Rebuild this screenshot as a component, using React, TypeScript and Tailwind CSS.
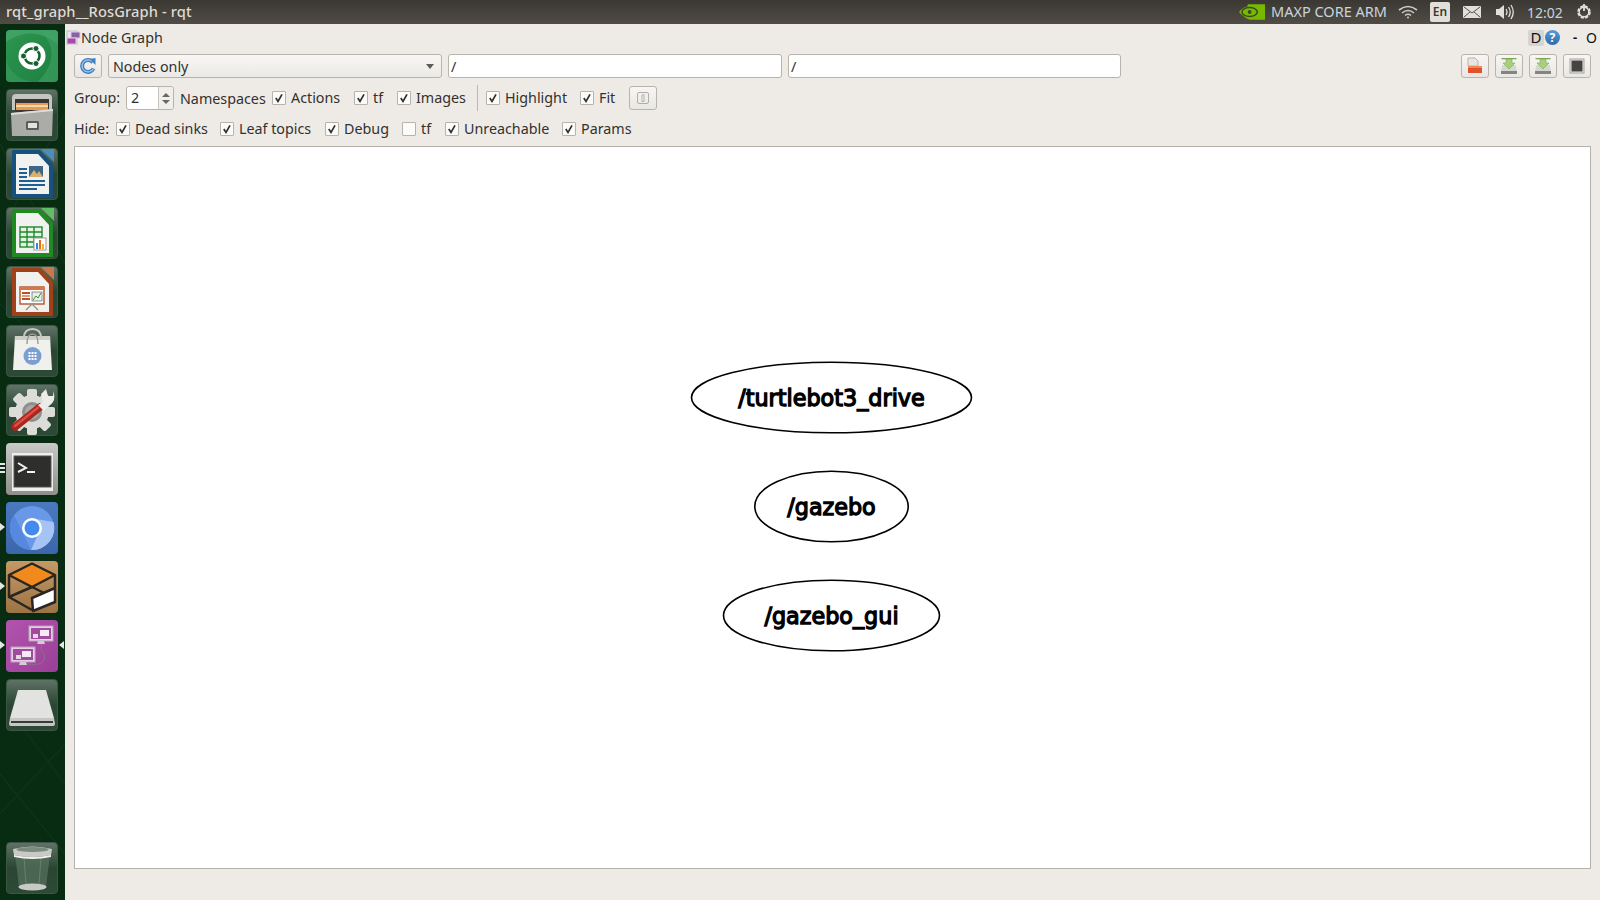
import type { ReactNode } from "react";

function Tile({ bg, children, className }: { bg: string; children: ReactNode; className?: string }) {
  return (
    <div className={`w-[52px] h-[52px] rounded-[4px] overflow-hidden shrink-0 ${bg} ${className ?? ""}`}>
      <svg viewBox="0 0 52 52" className="w-[52px] h-[52px] block">
        {children}
      </svg>
    </div>
  );
}

const plainTile = "bg-gradient-to-b from-[#5f7266] via-[#2a4632] to-[#2d4a36] border border-[#3d5546]";

function UbuntuIcon() {
  return (
    <Tile bg="bg-gradient-to-br from-[#2c9650] to-[#1e8040]">
      <path d="M0 12 Q26 -6 52 14 L52 0 L0 0Z" fill="#52ad74" opacity=".55" />
      <path d="M34 0 Q58 24 32 52 L52 52 L52 0Z" fill="#44a468" opacity=".55" />
      <path d="M0 30 Q6 48 26 52 L0 52Z" fill="#44a468" opacity=".4" />
      <circle cx="26" cy="26" r="13.5" fill="#ffffff" />
      <circle cx="26" cy="26" r="7.5" fill="none" stroke="#14602f" strokeWidth="2.6" />
      <circle cx="30" cy="18.5" r="3" fill="#14602f" stroke="#fff" />
      <circle cx="17.5" cy="26" r="3" fill="#14602f" stroke="#fff" />
      <circle cx="30" cy="33.5" r="3" fill="#14602f" stroke="#fff" />
    </Tile>
  );
}

function FilesIcon() {
  return (
    <Tile bg={plainTile}>
      <path d="M5 8 Q5 4 9 4 L41 4 Q45 4 45 8 L45 20 L5 20Z" fill="#c4c4c1" />
      <rect x="8" y="9" width="34" height="13" fill="#3a3633" />
      <rect x="9" y="13" width="32" height="7" fill="#e79a55" />
      <rect x="9" y="15" width="32" height="2" fill="#f7d9a9" />
      <path d="M4 23 L46 19 L45 46 L5 46Z" fill="#ababa8" />
      <path d="M4 23 L46 19 L46 21 L4 25Z" fill="#dcdcd9" />
      <rect x="19" y="31" width="13" height="9" rx="1.5" fill="#5c5c5a" />
      <rect x="21" y="33" width="9" height="5" fill="#e2e2e0" />
    </Tile>
  );
}

function DocShape({ edge, fold, children }: { edge: string; fold: string; children: ReactNode }) {
  return (
    <>
      <path d="M5 1 L33 1 L46 15 L46 49 L5 49Z" fill={edge} />
      <path d="M34 0 L47 0 L47 13Z" fill={fold} />
      <path d="M9 5 L31 5 L42 17 L42 45 L9 45Z" fill="#f1f1f0" />
      {children}
    </>
  );
}

function WriterIcon() {
  return (
    <Tile bg={plainTile}>
      <DocShape edge="#17527f" fold="#4d8dbb">
        <rect x="12" y="19" width="8" height="2" fill="#1b5f93" />
        <rect x="12" y="23" width="8" height="2" fill="#1b5f93" />
        <rect x="12" y="27" width="8" height="2" fill="#1b5f93" />
        <rect x="22" y="17" width="14" height="11" fill="#3e6687" />
        <path d="M22 28 L27 21 L30 25 L32 22 L36 28Z" fill="#d9b070" />
        <rect x="12" y="31" width="26" height="2" fill="#1b5f93" />
        <rect x="12" y="35" width="26" height="2" fill="#1b5f93" />
        <rect x="12" y="39" width="18" height="2" fill="#1b5f93" />
      </DocShape>
    </Tile>
  );
}

function CalcIcon() {
  return (
    <Tile bg={plainTile}>
      <DocShape edge="#1f8a1f" fold="#62bd62">
        <rect x="13" y="19" width="22" height="20" fill="#e6f3e4" stroke="#1d8a2b" strokeWidth="1.4" />
        <path d="M13 24 H35 M13 29 H35 M13 34 H35 M20 19 V39 M27 19 V39" stroke="#1d8a2b" strokeWidth="1.4" />
        <rect x="27" y="30" width="12" height="12" fill="#fff" stroke="#9a9a9a" />
        <rect x="29" y="35" width="2" height="6" fill="#2b8ccf" />
        <rect x="32" y="32" width="2" height="9" fill="#e5672a" />
        <rect x="35" y="36" width="2" height="5" fill="#f0b429" />
      </DocShape>
    </Tile>
  );
}

function ImpressIcon() {
  return (
    <Tile bg={plainTile}>
      <DocShape edge="#a0411a" fold="#c9784e">
        <rect x="13" y="20" width="24" height="17" fill="#fff" stroke="#b5532a" strokeWidth="1.4" />
        <rect x="13" y="20" width="24" height="3" fill="#d8764a" />
        <rect x="15" y="25" width="8" height="2" fill="#b5532a" />
        <rect x="15" y="28" width="8" height="2" fill="#e39a75" />
        <rect x="15" y="31" width="8" height="2" fill="#b5532a" />
        <rect x="25" y="25" width="10" height="9" fill="#e6efe2" stroke="#666" strokeWidth=".7" />
        <path d="M26 33 L29 29 L31 31 L34 26" stroke="#3f8f3f" fill="none" />
        <path d="M25 37 L19 43 M25 37 L31 43" stroke="#8f8f8f" strokeWidth="1.3" />
      </DocShape>
    </Tile>
  );
}

function BagIcon() {
  return (
    <Tile bg={plainTile}>
      <path d="M8 10 L43 10 L45 44 L6 44Z" fill="#f0f0ec" />
      <path d="M8 10 L43 10 L43.2 14 L7.8 14Z" fill="#cfcfca" />
      <path d="M17 12 Q17 3 25.5 3 Q34 3 34 12" fill="none" stroke="#c6c6c2" strokeWidth="2" />
      <path d="M20 18 Q20 8 25.5 8 Q31 8 31 18" fill="none" stroke="#9a9a96" strokeWidth="1.4" />
      <circle cx="25.5" cy="30" r="9" fill="#7b9fd0" />
      <g fill="#fff">
        <rect x="21.5" y="26" width="2" height="2" /><rect x="24.5" y="26" width="2" height="2" /><rect x="27.5" y="26" width="2" height="2" />
        <rect x="21.5" y="29" width="2" height="2" /><rect x="24.5" y="29" width="2" height="2" /><rect x="27.5" y="29" width="2" height="2" />
        <rect x="21.5" y="32" width="2" height="2" /><rect x="24.5" y="32" width="2" height="2" /><rect x="27.5" y="32" width="2" height="2" />
      </g>
    </Tile>
  );
}

function SettingsIcon() {
  return (
    <Tile bg={plainTile}>
      <g fill="#dcdcd8">
        <circle cx="25" cy="27" r="17" />
        <rect x="20" y="4" width="10" height="46" rx="2" />
        <rect x="2" y="22" width="46" height="10" rx="2" />
        <rect x="20" y="4" width="10" height="46" rx="2" transform="rotate(45 25 27)" />
        <rect x="20" y="4" width="10" height="46" rx="2" transform="rotate(-45 25 27)" />
      </g>
      <circle cx="25" cy="27" r="10" fill="#8c8f8b" />
      <circle cx="25" cy="27" r="7" fill="#a5a8a3" />
      <path d="M8 42 L33 22" stroke="#a82820" strokeWidth="7.5" strokeLinecap="round" />
      <path d="M8 41 L31 22.5" stroke="#df4d42" strokeWidth="2.5" strokeLinecap="round" />
      <path d="M31 20 L36 17 L34 9 L39 4 L41 11 L46 11 L46 6 Q50 16 42 21 L37 26Z" fill="#ecece9" />
    </Tile>
  );
}

function TerminalIcon() {
  return (
    <Tile bg="bg-gradient-to-b from-[#c9c9c7] to-[#8f8f8c]">
      <rect x="6" y="10" width="41" height="38" fill="#eeeeec" />
      <rect x="8" y="13" width="37" height="31" fill="#2e2e2c" stroke="#555" />
      <path d="M12 20 L20 25 L12 29" fill="none" stroke="#f0f0f0" strokeWidth="2" />
      <rect x="21" y="28" width="8" height="2" fill="#f0f0f0" />
    </Tile>
  );
}

function ChromiumIcon() {
  return (
    <Tile bg="bg-gradient-to-b from-[#4b79bf] to-[#3c66aa]">
      <circle cx="26" cy="26" r="22" fill="#6a98e8" />
      <path d="M47.5 20 A22 22 0 0 1 25 48 L34 28 L30 17Z" fill="#a6c3f5" />
      <path d="M8 13 L25 48 A22 22 0 0 1 8 13Z" fill="#5688df" />
      <circle cx="26" cy="26" r="10" fill="#fff" />
      <circle cx="26" cy="26" r="7.5" fill="#4289f0" />
    </Tile>
  );
}

function GazeboIcon() {
  return (
    <Tile bg="bg-gradient-to-b from-[#c39a66] to-[#9c7344]">
      <path d="M26 2.5 L49 14 L26 26 L3 14Z" fill="#f08a1c" stroke="#2b2622" strokeWidth="2.5" strokeLinejoin="round" />
      <path d="M3 14 L3 36 L26 49 M3 36 L26 26 L40 33 M49 14 L49 27" fill="none" stroke="#2b2622" strokeWidth="2.5" strokeLinejoin="round" />
      <path d="M26 37 L49 27 L49 41 L27 50Z" fill="#ffffff" stroke="#2b2622" strokeWidth="2.5" strokeLinejoin="round" />
    </Tile>
  );
}

function RqtIcon() {
  return (
    <Tile bg="bg-gradient-to-br from-[#b254ae] to-[#9a3f98]">
      <rect x="23" y="6" width="24" height="15" fill="#e4cfe4" stroke="#b9a4b9" />
      <rect x="25" y="8" width="20" height="11" fill="#a24aa0" />
      <rect x="34" y="10" width="9" height="6" fill="#f4eaf4" />
      <rect x="27" y="14" width="5" height="4" fill="#e9d4e9" />
      <path d="M32 21 H38 L39 24 H31Z" fill="#d8c8d8" />
      <rect x="5" y="27" width="24" height="15" fill="#e4cfe4" stroke="#b9a4b9" />
      <rect x="7" y="29" width="20" height="11" fill="#a24aa0" />
      <rect x="16" y="31" width="9" height="6" fill="#f4eaf4" />
      <rect x="10" y="35" width="5" height="4" fill="#e9d4e9" />
      <path d="M14 42 H20 L21 45 H13Z" fill="#d8c8d8" />
      <path d="M22 44 Q36 46 38 40 Q40 34 36 32 Q34 28 36 24" fill="none" stroke="#8b6f8b" strokeWidth="1" />
    </Tile>
  );
}

function DriveIcon() {
  return (
    <Tile bg={plainTile}>
      <path d="M11 10 L39 10 L47 38 L3 38Z" fill="#e2e2e0" />
      <path d="M3 38 L47 38 L48 44 Q48 46 46 46 L4 46 Q2 46 2 44Z" fill="#c6c6c4" />
      <rect x="4" y="41" width="42" height="2" fill="#3a3a38" />
    </Tile>
  );
}

function TrashIcon() {
  return (
    <Tile bg={plainTile}>
      <path d="M8 11 L43 11 L39 44 L12 44Z" fill="#56705e" opacity=".75" />
      <path d="M17 14 L19 42 M34 14 L32 42" stroke="#86988c" strokeWidth="1" opacity=".5" />
      <ellipse cx="25.5" cy="44" rx="14" ry="3.5" fill="#c9c9c6" />
      <path d="M6 6 Q25.5 1 45 6 L44 12 Q25.5 16 7 12Z" fill="#c9c9c5" />
      <ellipse cx="25.5" cy="6.5" rx="16" ry="2.5" fill="#7b8a7e" />
      <path d="M7 12 Q25.5 16 44 12 L44 14 Q25.5 18 7 14Z" fill="#efefec" />
    </Tile>
  );
}

function Dock() {
  return (
    <aside className="relative w-[65px] shrink-0 h-full bg-[#082c12] flex flex-col pl-[6px] pt-[6px] pb-[6px] overflow-hidden">
      <svg className="absolute inset-0 w-full h-full" viewBox="0 0 65 876" preserveAspectRatio="none">
        <path d="M0 120 L65 240 M65 90 L10 190 M0 280 L65 340 M0 750 L65 830 M20 700 L65 760 M65 720 L0 790" stroke="#1c4a28" strokeWidth="1" opacity=".45" fill="none" />
      </svg>
      <div className="relative flex flex-col gap-[7px]">
        <UbuntuIcon />
        <FilesIcon />
        <WriterIcon />
        <CalcIcon />
        <ImpressIcon />
        <BagIcon />
        <SettingsIcon />
        <TerminalIcon />
        <ChromiumIcon />
        <GazeboIcon />
        <RqtIcon />
        <DriveIcon />
      </div>
      <div className="relative mt-auto">
        <TrashIcon />
      </div>
      {/* launcher pips */}
      <div className="absolute left-0 top-[439px] w-[5px] flex flex-col gap-[2px]">
        <div className="h-[2px] bg-[#e6e6e6]" />
        <div className="h-[2px] bg-[#e6e6e6]" />
        <div className="h-[2px] bg-[#e6e6e6]" />
      </div>
      <Pip className="top-[499px] left-0" />
      <Pip className="top-[558px] left-0" />
      <Pip className="top-[617px] left-0" />
      <Pip className="top-[617px] left-[59px] rotate-180" />
    </aside>
  );
}

function Pip({ className }: { className: string }) {
  return (
    <div
      className={`absolute w-0 h-0 border-y-[4px] border-y-transparent border-l-[5px] border-l-[#e6e6e6] ${className}`}
    />
  );
}

function TopBar() {
  return (
    <header className="h-[24px] shrink-0 bg-gradient-to-b from-[#3b3833] to-[#504c45] flex items-center text-[#dfdbd2] text-[14.7px] font-['Noto_Sans',sans-serif]">
      <span className="pl-[6px] pb-[1px] font-medium tracking-[0.1px]">rqt_graph__RosGraph - rqt</span>
      <div className="ml-auto flex items-center h-full">
        <svg width="27" height="16" viewBox="0 0 28 16">
          <path d="M9 0 H27 V16 H11 Q4 13 0 8 Q4 3 9 2Z" fill="#76b900" />
          <ellipse cx="11" cy="8" rx="8" ry="4.6" fill="none" stroke="#3e4a24" strokeWidth="1.6" />
          <circle cx="11" cy="8" r="2" fill="#3e4a24" />
        </svg>
        <span className="ml-[5px] w-[118px] text-[14.5px] text-[#c9d4de] whitespace-nowrap">MAXP CORE ARM</span>
        <svg className="ml-[9px]" width="20" height="14" viewBox="0 0 20 14" fill="none" stroke="#cfcbc2" strokeWidth="1.6">
          <path d="M1 5 Q10 -2 19 5" />
          <path d="M4 8 Q10 3 16 8" />
          <path d="M7 10.5 Q10 8 13 10.5" />
          <circle cx="10" cy="12.5" r="1" fill="#cfcbc2" stroke="none" />
        </svg>
        <span className="ml-[12px] w-[20px] h-[20px] rounded-[2px] bg-[#e2dfd9] text-[#3b3833] text-[12px] font-semibold flex items-center justify-center">En</span>
        <svg className="ml-[13px]" width="18" height="12" viewBox="0 0 18 12">
          <rect width="18" height="12" rx="1" fill="#e2dfd9" />
          <path d="M1 1 L9 7 L17 1 M1 11 L7 6 M17 11 L11 6" fill="none" stroke="#55514a" />
        </svg>
        <svg className="ml-[14px]" width="20" height="16" viewBox="0 0 20 16" fill="none">
          <path d="M1 5 H4 L9 1 V15 L4 11 H1Z" fill="#e2dfd9" />
          <path d="M11 5 Q13 8 11 11 M13.5 3 Q17 8 13.5 13 M16 1 Q20.5 8 16 15" stroke="#e2dfd9" strokeWidth="1.3" />
        </svg>
        <span className="ml-[12px] w-[37px] text-[14px] text-[#c9d4de] whitespace-nowrap">12:02</span>
        <svg className="ml-[11px] mr-[7px]" width="18" height="18" viewBox="0 0 18 18" fill="none">
          <circle cx="9" cy="9" r="5.6" stroke="#e2dfd9" strokeWidth="2.4" strokeDasharray="3 1.4" />
          <circle cx="9" cy="9" r="4.8" stroke="#e2dfd9" strokeWidth="1.4" />
          <path d="M9 1 V8" stroke="#e2dfd9" strokeWidth="1.8" />
        </svg>
      </div>
    </header>
  );
}

function Check({ label, w, on = true }: { label: string; w: string; on?: boolean }) {
  return (
    <label className={`flex items-center shrink-0 ${w}`}>
      <span className="relative w-[14px] h-[14px] shrink-0 bg-[#fbfbfa] border border-[#b7b3ab] rounded-[1px]">
        {on && (
          <svg className="absolute left-[1px] top-[1px]" width="10" height="10" viewBox="0 0 10 10" fill="none">
            <path d="M1.8 5 L4 8.4 L8 1.4" stroke="#2f2f2f" strokeWidth="1.7" />
          </svg>
        )}
      </span>
      <span className="ml-[5px] whitespace-nowrap">{label}</span>
    </label>
  );
}

function ToolButton({ children, className }: { children: ReactNode; className?: string }) {
  return (
    <div className={`w-[28px] h-[24px] shrink-0 rounded-[3px] border border-[#b8b4ac] bg-gradient-to-b from-[#f7f6f4] to-[#e9e7e3] flex items-center justify-center ${className ?? ""}`}>
      {children}
    </div>
  );
}

function SaveIcon() {
  return (
    <svg width="18" height="18" viewBox="0 0 18 18">
      <path d="M2.5 8 H15.5 L17 14 V17 H1 V14Z" fill="#d4d7ce" />
      <rect x="1" y="14" width="16" height="3" fill="#83867e" />
      <rect x="1.5" y="1" width="15" height="1.3" fill="#7fa55a" />
      <path d="M6 2.3 H12 V6 H15 L9 12 L3 6 H6Z" fill="#a8d07a" stroke="#80a95a" strokeWidth=".6" />
    </svg>
  );
}

function Toolbar() {
  return (
    <div className="flex flex-col text-[14.3px] text-[#33312e] font-['Noto_Sans',sans-serif]">
      <div className="h-[27px] flex items-center">
        <svg className="ml-[1px]" width="15" height="16" viewBox="0 0 15 16">
          <rect x="1" y="1" width="10" height="13" fill="#e9e7ee" stroke="#bdb9c4" />
          <rect x="5" y="2" width="9" height="6" fill="#8c5fa8" stroke="#d8cfe0" />
          <rect x="1" y="8" width="9" height="6" fill="#a84aa8" stroke="#d8cfe0" />
        </svg>
        <span className="whitespace-nowrap">Node Graph</span>
        <div className="ml-auto flex items-center h-[16px] mr-[3px]">
          <span className="w-[16px] h-[16px] bg-[#d7d5d0] rounded-[2px] text-[#111] text-[15px] flex items-center justify-center">D</span>
          <span className="w-[15px] h-[15px] ml-[1px] rounded-full bg-gradient-to-b from-[#5a9bd8] to-[#2a6cab] text-white text-[12px] font-bold flex items-center justify-center">?</span>
          <span className="ml-[13px] text-[#111] font-bold text-[13px]">-</span>
          <span className="ml-[9px] text-[#111] text-[14px]">O</span>
        </div>
      </div>

      <div className="h-[24px] mt-[3px] flex items-center pl-[9px]">
        <ToolButton>
          <svg width="18" height="18" viewBox="0 0 18 18" fill="none">
            <path d="M14 5.5 A6 6 0 1 0 14.5 11.5" stroke="#3f7fc4" strokeWidth="4" />
            <path d="M14 5.5 A6 6 0 1 0 14.5 11.5" stroke="#a9c9e8" strokeWidth="1.2" />
            <path d="M10.5 2 L16.5 1 V8Z" fill="#3f7fc4" />
          </svg>
        </ToolButton>
        <div className="ml-[6px] w-[334px] h-[24px] rounded-[3px] border border-[#b8b4ac] bg-gradient-to-b from-[#f8f7f5] to-[#ebe9e5] flex items-center pl-[4px] pr-[7px]">
          <span className="pt-[2px]">Nodes only</span>
          <span className="ml-auto w-0 h-0 border-x-[4px] border-x-transparent border-t-[5px] border-t-[#5e5c58]" />
        </div>
        <div className="ml-[6px] w-[334px] h-[24px] rounded-[3px] border border-[#b8b4ac] bg-white flex items-center pl-[2px] pt-[2px]">/</div>
        <div className="ml-[6px] w-[333px] h-[24px] rounded-[3px] border border-[#b8b4ac] bg-white flex items-center pl-[2px] pt-[2px]">/</div>
        <div className="ml-auto flex gap-[6px] pr-[9px]">
          <ToolButton>
            <svg width="18" height="18" viewBox="0 0 18 18">
              <path d="M2 1 H9 L12 4 V9 H2Z" fill="#e8e6e2" stroke="#b8b4ac" />
              <path d="M2 9 H16 V16 H2Z" fill="#e2532a" />
              <path d="M2 9 H16 V11 H2Z" fill="#f08a5a" />
            </svg>
          </ToolButton>
          <ToolButton><SaveIcon /></ToolButton>
          <ToolButton><SaveIcon /></ToolButton>
          <ToolButton>
            <svg width="16" height="16" viewBox="0 0 16 16">
              <rect x="1" y="1" width="14" height="14" fill="#eceae6" stroke="#a5a39d" />
              <rect x="2.5" y="2.5" width="11" height="11" fill="#454442" />
            </svg>
          </ToolButton>
        </div>
      </div>

      <div className="h-[24px] mt-[8px] flex items-center pl-[9px]">
        <span className="w-[52px] shrink-0">Group:</span>
        <div className="w-[48px] h-[24px] shrink-0 rounded-[3px] border border-[#b8b4ac] bg-white flex items-stretch">
          <span className="flex-1 flex items-center pl-[4px]">2</span>
          <div className="w-[15px] border-l border-[#c8c5be] bg-[#f1efec] flex flex-col items-center justify-center gap-[3px] rounded-r-[3px]">
            <span className="w-0 h-0 border-x-[4px] border-x-transparent border-b-[4px] border-b-[#6a6864]" />
            <span className="w-0 h-0 border-x-[4px] border-x-transparent border-t-[4px] border-t-[#6a6864]" />
          </div>
        </div>
        <span className="ml-[6px] w-[92px] shrink-0 whitespace-nowrap pt-[1px]">Namespaces</span>
        <Check label="Actions" w="w-[82px]" />
        <Check label="tf" w="w-[43px]" />
        <Check label="Images" w="w-[80px]" />
        <div className="w-px h-[26px] bg-[#bdbab3] mr-[8px] shrink-0" />
        <Check label="Highlight" w="w-[94px]" />
        <Check label="Fit" w="w-[49px]" />
        <ToolButton>
          <svg width="14" height="14" viewBox="0 0 14 14" fill="none">
            <rect x="1.5" y="1.5" width="11" height="11" rx="1.5" stroke="#b0aea8" />
            <path d="M6 4 L8 3.5 V10.5 H6Z" fill="#f5f4f2" stroke="#a5a39d" strokeWidth=".8" />
          </svg>
        </ToolButton>
      </div>

      <div className="h-[24px] mt-[7px] flex items-center pl-[9px]">
        <span className="w-[42px] shrink-0">Hide:</span>
        <Check label="Dead sinks" w="w-[104px]" />
        <Check label="Leaf topics" w="w-[105px]" />
        <Check label="Debug" w="w-[77px]" />
        <Check label="tf" w="w-[43px]" on={false} />
        <Check label="Unreachable" w="w-[117px]" />
        <Check label="Params" w="w-[80px]" />
      </div>
    </div>
  );
}

function Canvas() {
  return (
    <div className="mt-[5px] ml-[9px] mr-[9px] h-[723px] bg-white border border-[#b5b2ab]">
      <svg viewBox="0 0 1515 721" className="w-full h-full block">
        <g fill="none" stroke="#000" strokeWidth="1.6">
          <ellipse cx="756.5" cy="250.5" rx="140" ry="35.3" />
          <ellipse cx="756.5" cy="359.5" rx="76.7" ry="35.3" />
          <ellipse cx="756.5" cy="468.5" rx="108" ry="35.3" />
        </g>
        <g
          fontFamily="'DejaVu Sans', sans-serif"
          fontSize="22.3"
          fill="#000"
          stroke="#000"
          strokeWidth="1.3"
          textAnchor="middle"
        >
          <text x="756.5" y="259">/turtlebot3_drive</text>
          <text x="756.5" y="368">/gazebo</text>
          <text x="756.5" y="477">/gazebo_gui</text>
        </g>
      </svg>
    </div>
  );
}

export default function App() {
  return (
    <div className="w-[1600px] h-[900px] flex flex-col overflow-hidden bg-[#eeebe6]">
      <TopBar />
      <div className="flex-1 flex min-h-0">
        <Dock />
        <main className="flex-1 flex flex-col min-w-0">
          <Toolbar />
          <Canvas />
        </main>
      </div>
    </div>
  );
}
